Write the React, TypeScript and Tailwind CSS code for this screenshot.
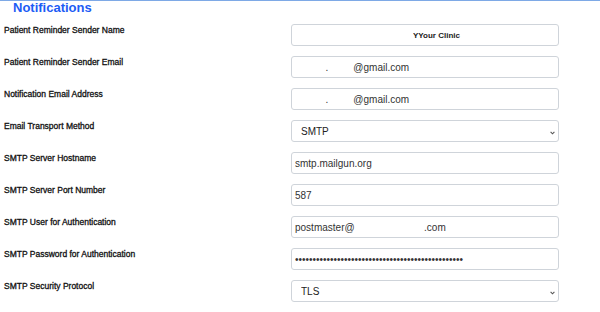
import React from 'react';

const sp = (n: number) => ' '.repeat(n);

type Field = {
  label: string;
  kind: 'text' | 'password' | 'select';
  value: string;
  bold?: boolean;
};

const fields: Field[] = [
  { label: 'Patient Reminder Sender Name', kind: 'text', value: 'YYour Clinic', bold: true },
  { label: 'Patient Reminder Sender Email', kind: 'text', value: sp(11) + '.' + sp(9) + '@gmail.com' },
  { label: 'Notification Email Address', kind: 'text', value: sp(11) + '.' + sp(9) + '@gmail.com' },
  { label: 'Email Transport Method', kind: 'select', value: 'SMTP' },
  { label: 'SMTP Server Hostname', kind: 'text', value: 'smtp.mailgun.org' },
  { label: 'SMTP Server Port Number', kind: 'text', value: '587' },
  { label: 'SMTP User for Authentication', kind: 'text', value: 'postmaster@' + sp(25) + '.com' },
  { label: 'SMTP Password for Authentication', kind: 'password', value: 'x'.repeat(48) },
  { label: 'SMTP Security Protocol', kind: 'select', value: 'TLS' },
];

function Control({ field }: { field: Field }) {
  const base = 'block h-[22px] w-[268px] rounded-[3px] border border-[#cfd4da] bg-white outline-none';
  if (field.kind === 'select') {
    return (
      <div className="relative h-[22px]">
        <select
          className={`${base} appearance-none pl-[9px] text-[10px] text-[#222]`}
          defaultValue={field.value}
        >
          <option>{field.value}</option>
        </select>
        <svg
          className="pointer-events-none absolute right-[4px] top-[11px]"
          width="5"
          height="4"
          viewBox="0 0 5 4"
        >
          <path d="M0.6 0.8 L2.5 2.8 L4.4 0.8" fill="none" stroke="#555" strokeWidth="1.1" />
        </svg>
      </div>
    );
  }
  return (
    <input
      type={field.kind}
      readOnly
      value={field.value}
      className={`${base} ${
        field.bold ? 'pl-[121px] text-[8px] font-bold text-[#222]' : 'pl-[3px] text-[10px] text-[#333]'
      }`}
    />
  );
}

export default function App() {
  return (
    <div
      className="h-[312px] w-[600px] overflow-hidden bg-white"
      style={{ fontFamily: '"Liberation Sans", Arial, sans-serif' }}
    >
      <div className="mb-[9px] border-t border-[#7ea9e6] pl-[13px]">
        <h2 className="text-[13px] font-bold leading-[14px] text-[#1d5cf5]">Notifications</h2>
      </div>
      <div className="flex flex-col gap-[10px] pl-[4px]">
        {fields.map((f) => (
          <div key={f.label} className="flex h-[22px] items-start">
            <label className="w-[287px] text-[8.5px] leading-[13px] text-[#111] [-webkit-text-stroke:0.3px_#111]">
              {f.label}
            </label>
            <Control field={f} />
          </div>
        ))}
      </div>
    </div>
  );
}
